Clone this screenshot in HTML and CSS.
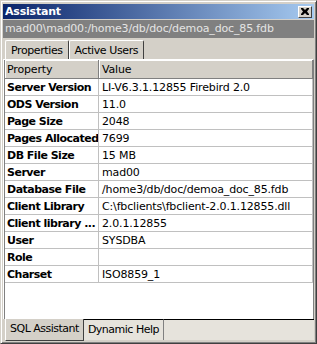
FILE: index.html
```html
<!DOCTYPE html>
<html lang="en">
<head>
    <meta charset="UTF-8">
    <title>Assistant</title>
    <link rel="stylesheet" href="styles.css">
</head>
<body>
    <div class="window">
        <div class="titlebar">
            <span class="title">Assistant</span>
            <span class="close-btn">
                <svg width="8" height="7" viewBox="0 0 8 7"><path d="M0 0h2l2 2 2-2h2v1l-2 2.5 2 2.5v1h-2l-2-2-2 2h-2v-1l2-2.5-2-2.5z" fill="#000"/></svg>
            </span>
        </div>
        <div class="pathbar">mad00\mad00:/home3/db/doc/demoa_doc_85.fdb</div>
        <div class="top-tabs">
            <span class="tab active">Properties</span>
            <span class="tab">Active Users</span>
        </div>
        <div class="panel">
            <div class="grid-wrap">
                <table class="grid">
                    <tr class="head"><th class="col-prop">Property</th><th>Value</th></tr>
                    <tr><td class="key">Server Version</td><td>LI-V6.3.1.12855 Firebird 2.0</td></tr>
                    <tr><td class="key">ODS Version</td><td>11.0</td></tr>
                    <tr><td class="key">Page Size</td><td>2048</td></tr>
                    <tr><td class="key">Pages Allocated</td><td>7699</td></tr>
                    <tr><td class="key">DB File Size</td><td>15 MB</td></tr>
                    <tr><td class="key">Server</td><td>mad00</td></tr>
                    <tr><td class="key">Database File</td><td>/home3/db/doc/demoa_doc_85.fdb</td></tr>
                    <tr><td class="key">Client Library</td><td>C:\fbclients\fbclient-2.0.1.12855.dll</td></tr>
                    <tr><td class="key">Client library ...</td><td>2.0.1.12855</td></tr>
                    <tr><td class="key">User</td><td>SYSDBA</td></tr>
                    <tr><td class="key">Role</td><td></td></tr>
                    <tr><td class="key">Charset</td><td>ISO8859_1</td></tr>
                </table>
            </div>
        </div>
        <div class="bottom-tabs">
            <span class="btab active">SQL Assistant</span>
            <span class="btab">Dynamic Help</span>
            <span class="btab-rest"></span>
        </div>
    </div>
</body>
</html>
```

FILE: styles.css
```css
body {
    margin: 0;
    padding: 0;
    background: #d4d0c8;
    font-family: Tahoma, "DejaVu Sans", sans-serif;
    font-size: 11px;
    letter-spacing: -0.15px;
}
.window {
    width: 317px;
    height: 344px;
    box-sizing: border-box;
    background: #d4d0c8;
    border: 1px solid #d4d0c8;
    border-right-color: #404040;
    border-bottom-color: #404040;
    box-shadow: inset 1px 1px 0 #fff, inset -1px -1px 0 #808080;
    padding: 3px 2px 2px 2px;
    display: flex;
    flex-direction: column;
}
.titlebar {
    height: 15px;
    flex: none;
    background: linear-gradient(to right, #0a246a, #a6caf0);
    display: flex;
    align-items: center;
    justify-content: space-between;
    padding: 0 2px 0 2px;
}
.title { color: #fff; font-weight: bold; letter-spacing: -0.2px; }
.close-btn {
    width: 14px;
    height: 12px;
    box-sizing: border-box;
    background: #d4d0c8;
    border: 1px solid;
    border-color: #fff #404040 #404040 #fff;
    display: flex;
    align-items: center;
    justify-content: center;
}
.pathbar {
    height: 18px;
    flex: none;
    line-height: 18px;
    background: #808080;
    color: #e4e4e4;
    padding-left: 2px;
    margin-top: 1px;
    white-space: nowrap;
    overflow: hidden;
}
.top-tabs {
    display: flex;
    flex: none;
    padding: 2px 0 0 2px;
    height: 19px;
    letter-spacing: -0.4px;
}
.tab {
    padding: 2px 5px 0;
    border: 1px solid;
    border-color: #fff #404040 transparent #fff;
    border-bottom: none;
    border-radius: 2px 2px 0 0;
    line-height: 15px;
}
.panel {
    flex: 1;
    border-top: 1px solid #fff;
    border-left: 1px solid #fff;
    border-right: 1px solid #808080;
    display: flex;
    flex-direction: column;
}
.grid-wrap {
    flex: 1;
    background: #fff;
    border-left: 1px solid #808080;
}
.grid {
    width: 100%;
    border-collapse: collapse;
    table-layout: fixed;
}
.grid th, .grid td {
    height: 16px;
    padding: 0 3px;
    border-bottom: 1px solid #c0c0c0;
    border-right: 1px solid #c0c0c0;
    text-align: left;
    font-weight: normal;
    white-space: nowrap;
    overflow: hidden;
    vertical-align: middle;
}
.grid tr.head th {
    background: #d4d0c8;
    height: 18px;
    border-bottom: 1px solid #808080;
    border-right: 1px solid #808080;
    box-shadow: inset 1px 1px 0 #fff;
}
.grid .col-prop { width: 88px; padding-left: 2px; }
.grid td.key { font-weight: bold; letter-spacing: -0.5px; padding-left: 2px; }
.bottom-tabs {
    display: flex;
    flex: none;
    height: 22px;
    letter-spacing: -0.5px;
}
.btab {
    padding: 2px 4px 0;
    line-height: 16px;
}
.btab.active {
    background: #d4d0c8;
    border-left: 1px solid #fff;
    border-right: 1px solid #404040;
    border-bottom: 1px solid #404040;
    margin-left: 2px;
}
.btab:not(.active) {
    border-top: 1px solid #000;
    border-right: 1px solid #808080;
    background: #e6e3dc;
    margin-bottom: 1px;
}
.btab-rest {
    flex: 1;
    border-top: 1px solid #000;
    background: #e6e3dc;
    margin-bottom: 1px;
}
```
